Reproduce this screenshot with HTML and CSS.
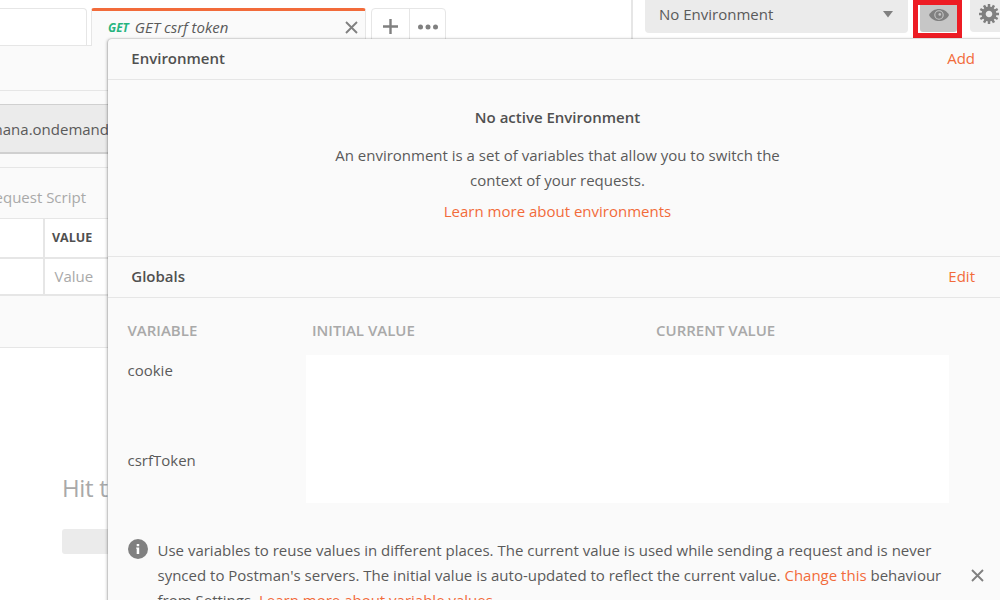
FILE: index.html
```
<!DOCTYPE html>
<html lang="en">
<head>
<meta charset="utf-8">
<title>Postman</title>
<link rel="stylesheet" href="styles.css">
</head>
<body>
<div class="app">
  <header class="topbar">
    <div class="tabs">
      <div class="tab tab-idle"></div>
      <div class="tab tab-active">
        <span class="method">GET</span>
        <span class="tab-title">GET csrf token</span>
        <svg class="tab-close" width="13" height="13" viewBox="0 0 13 13"><path d="M1 1L12 12M12 1L1 12"/></svg>
      </div>
      <div class="tab-tools">
        <div class="tool tool-add"><svg width="15" height="15" viewBox="0 0 15 15"><path d="M7.5 0V15M0 7.5H15"/></svg></div>
        <div class="tool"><svg width="20" height="6" viewBox="0 0 20 6"><circle cx="2.5" cy="3" r="2.5"/><circle cx="10" cy="3" r="2.5"/><circle cx="17.5" cy="3" r="2.5"/></svg></div>
      </div>
    </div>
    <div class="env-controls">
      <div class="env-select"><span>No Environment</span><svg width="10" height="7" viewBox="0 0 10 7"><path d="M0 0H10L5 6.5Z"/></svg></div>
      <div class="eye-frame"><div class="eye-button">
        <svg width="20" height="12" viewBox="0 0 20 12"><path class="eye-shape" d="M0 6C4-2 16-2 20 6C16 14 4 14 0 6Z"/><circle class="eye-ring" cx="10" cy="6" r="4.2"/><circle class="eye-shine" cx="10.8" cy="5.4" r="1.3"/></svg>
      </div></div>
      <div class="settings"><svg width="20" height="20" viewBox="-10 -10 20 20">
        <circle class="gear-body" r="5.4"/>
        <g class="gear-teeth"><path d="M0-6V-10M0 6V10M6 0H10M-6 0H-10"/><path d="M0-6V-10M0 6V10M6 0H10M-6 0H-10" transform="rotate(30)"/><path d="M0-6V-10M0 6V10M6 0H10M-6 0H-10" transform="rotate(60)"/></g>
      </svg></div>
    </div>
  </header>
  <main class="request">
    <div class="name-row"></div>
    <div class="url-row"><div class="url"><span>hana.ondemand</span></div></div>
    <div class="request-tabs"><span>Pre-request Script</span></div>
    <div class="params">
      <div class="cell"></div><div class="cell cell-head">VALUE</div>
      <div class="cell cell-line"></div><div class="cell cell-line cell-value">Value</div>
    </div>
    <div class="spacer"></div>
    <div class="response"><div class="hit">Hit t</div><div class="placeholder"></div></div>
  </main>
  <section class="popover">
    <div class="section-head"><h2>Environment</h2><a>Add</a></div>
    <div class="empty">
      <h3>No active Environment</h3>
      <p>An environment is a set of variables that allow you to switch the<br>context of your requests.</p>
      <a>Learn more about environments</a>
    </div>
    <div class="section-head globals-head"><h2>Globals</h2><a>Edit</a></div>
    <div class="globals">
      <div class="columns"><span>VARIABLE</span><span>INITIAL VALUE</span><span>CURRENT VALUE</span></div>
      <div class="values">
        <div class="names"><span>cookie</span><span>csrfToken</span></div>
        <div class="redacted"></div>
      </div>
    </div>
    <div class="notice">
      <svg class="info" width="20" height="20" viewBox="0 0 20 20"><circle cx="10" cy="10" r="10"/><path d="M8.7 5H11.2V7.2H8.7ZM8.2 8.4H11.2V15H8.7V9.8H8.2Z"/></svg>
      <p>Use variables to reuse values in different places. The current value is used while sending a request and is never<br>synced to Postman's servers. The initial value is auto-updated to reflect the current value. <a>Change this</a> behaviour<br>from Settings. <a>Learn more about variable values</a></p>
      <svg class="dismiss" width="13" height="13" viewBox="0 0 13 13"><path d="M1 1L12 12M12 1L1 12"/></svg>
    </div>
  </section>
</div>
</body>
</html>
```

FILE: styles.css
```
* { box-sizing: border-box; }
body { margin: 0; font: 15px/25px "Open Sans", sans-serif; color: #5a5a5a; background: #fff; }
h2, h3, p { margin: 0; font-size: 15px; }
h2, h3 { font-weight: 600; color: #505050; }
a { color: #f26b3a; }
svg { display: block; flex: none; }
.app { position: relative; width: 1000px; height: 600px; overflow: hidden; }

.topbar { display: flex; justify-content: space-between; height: 46px; }
.tabs { display: flex; width: 633px; padding-top: 8px; border-right: 2px solid #e6e6e6; background: #fff; }
.tab { height: 38px; }
.tab-idle { width: 91px; border-bottom: 1px solid #e6e6e6; }
.tab-idle::before { content: ""; display: block; width: 86px; height: 37px; border: solid #e6e6e6; border-width: 1px 1px 0 0; border-radius: 0 4px 0 0; }
.tab-active { display: flex; align-items: center; width: 275px; padding: 0 7px 2px 16px; border-top: 3px solid #f26b3a; border-left: 1px solid #e6e6e6; border-right: 1px solid #e6e6e6; border-radius: 3px 3px 0 0; background: #fafafa; }
.method { margin-right: 6px; font-size: 11.8px; font-weight: 700; font-style: italic; color: #26b47f; }
.tab-title { font-size: 15px; letter-spacing: -.03px; font-style: italic; }
.tab-close, .dismiss { stroke: #808080; stroke-width: 1.9; fill: none; }
.tab-close { margin-left: auto; }
.tab-tools { display: flex; margin-left: 5px; width: 75px; border: 1px solid #e6e6e6; border-radius: 4px 4px 0 0; }
.tool { display: flex; flex: 1; align-items: center; justify-content: center; fill: #808080; }
.tool-add { flex: none; width: 38px; padding-bottom: 1px; border-right: 1px solid #e6e6e6; }
.tool-add path { stroke: #808080; stroke-width: 2.4; }

.env-controls { display: flex; width: 355px; }
.env-select { display: flex; align-items: center; justify-content: space-between; width: 263px; height: 33px; padding: 0 15px 5px 14px; border-radius: 0 0 4px 4px; background: #ebebeb; fill: #808080; }
.eye-frame { width: 49px; height: 38px; margin-left: 5px; padding: 0 0 0 2px; border: 5px solid #ed1c24; }
.eye-button { display: flex; align-items: center; justify-content: center; width: 37px; height: 27px; padding-bottom: 7px; border-radius: 0 0 3px 3px; background: #c6c6c6; }
.eye-shape { fill: #808080; }
.eye-ring { fill: none; stroke: #c6c6c6; stroke-width: 1.1; }
.eye-shine { fill: #c6c6c6; }
.settings { width: 30px; height: 32px; margin-left: 8px; padding: 4px 0 0 9px; background: #ebebeb; border-radius: 0 0 0 4px; overflow: hidden; }
.gear-body { fill: none; stroke: #808080; stroke-width: 4.2; }
.gear-teeth { stroke: #808080; stroke-width: 2.5; }

.request { width: 120px; height: 554px; background: #fafafa; }
.name-row { height: 45px; border-bottom: 1px solid #e6e6e6; }
.url-row { height: 77px; padding-top: 13px; border-bottom: 1px solid #e6e6e6; }
.url { display: flex; align-items: center; justify-content: flex-end; height: 50px; padding: 2px 11px 0 0; border-top: 1px solid #d0d0d0; border-bottom: 2px solid #d0d0d0; background: #ebebeb; }
.url span, .request-tabs span { white-space: nowrap; }
.request-tabs { display: flex; justify-content: flex-end; height: 50px; padding: 17px 34px 0 0; color: #a9a9a9; }
.params { display: grid; grid-template-columns: 43px 1fr; grid-template-rows: 38px 37px; height: 78px; border-top: 1px solid #e6e6e6; border-bottom: 2px solid #e6e6e6; background: #fff; }
.cell-head, .cell-value { border-left: 2px solid #e6e6e6; padding: 6px 0 0 7px; }
.cell-head { font-size: 12.5px; font-weight: 700; color: #505050; }
.cell-line { border-top: 2px solid #e6e6e6; }
.cell-value { padding: 5px 0 0 9.5px; color: #a9a9a9; }
.spacer { height: 51px; }
.response { height: 253px; padding: 123px 0 0 62px; border-top: 1px solid #e6e6e6; background: #fff; }
.hit { height: 34px; font-size: 24px; letter-spacing: -.35px; line-height: 34px; color: #a9a9a9; white-space: nowrap; }
.placeholder { height: 25px; margin-top: 24px; border-radius: 3px; background: #ebebeb; }

.popover { position: absolute; left: 108px; top: 39px; width: 900px; height: 580px; border-radius: 4px 0 0 0; background: #fafafa; box-shadow: 0 0 0 1px rgba(0,0,0,.06), -1px 0 3px rgba(0,0,0,.25); }
.section-head { display: flex; justify-content: space-between; height: 41px; padding: 7px 33px 0 23.3px; border-bottom: 1px solid #e6e6e6; }
.empty { height: 176px; padding: 25px 1px 0 0; text-align: center; }
.empty p { margin-top: 13px; }
.empty > a { display: block; margin-top: 6px; }
.globals-head { height: 42px; border-top: 1px solid #e6e6e6; }
.globals { padding: 20px 59px 0 19.5px; }
.columns { display: grid; grid-template-columns: 184.5px 344px 1fr; font-weight: 600; color: #a9a9a9; }
.values { display: flex; margin-top: 12px; }
.names { display: flex; flex-direction: column; width: 178.5px; gap: 65px; padding-top: 3px; }
.redacted { width: 643px; height: 148px; background: #fff; }
.notice { display: flex; padding: 35px 0 0 20px; white-space: nowrap; }
.info { margin-top: 1px; fill: #808080; }
.info path { fill: #fff; }
.notice p { width: 823px; padding-left: 9.5px; }
.dismiss { margin-top: 31px; }
```
